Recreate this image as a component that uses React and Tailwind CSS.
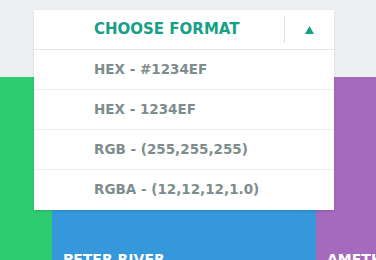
import React, { useState } from "react";

const formatos = ["HEX - #1234EF", "HEX - 1234EF", "RGB - (255,255,255)", "RGBA - (12,12,12,1.0)"];

const colores = [
  { nombre: "", clase: "bg-[#2ecc71] w-[52px]" },
  { nombre: "PETER RIVER", clase: "bg-[#3498db] w-[264px]" },
  { nombre: "AMETHYST", clase: "bg-[#a569bd] w-[264px]" },
];

const App = () => {
  const [abierto] = useState(true);

  return (
    <div className="relative w-[376px] h-[260px] overflow-hidden bg-[#ecf0f1] font-['DejaVu_Sans',sans-serif] font-bold">
      <div className="flex pt-[77px]">
        {colores.map((c, i) => (
          <div key={i} className={`${c.clase} shrink-0 h-[200px] pt-[175px] px-[11px] text-white text-[14px] leading-none whitespace-nowrap overflow-hidden`}>
            {c.nombre}
          </div>
        ))}
      </div>

      <div className="absolute left-[34px] top-[10px] w-[300px] bg-white shadow-sm">
        <div className="flex items-center h-[40px] border-b border-[#e6e8e9]">
          <div className="flex-1 pl-[60px] text-[15px] text-[#16a085] leading-none">CHOOSE FORMAT</div>
          <div className="w-px h-[27px] bg-[#dcdfe0]" />
          <div className="w-[49px] flex justify-center">
            <svg width="9" height="8" viewBox="0 0 9 8">
              <polygon points="4.5,0 9,8 0,8" fill="#16a085" />
            </svg>
          </div>
        </div>
        {abierto &&
          formatos.map((f, i) => (
            <div
              key={f}
              className={`h-[40px] flex items-center pl-[60px] text-[13.5px] text-[#7f8c8d] leading-none ${i < formatos.length - 1 ? "border-b border-[#eceeef]" : ""}`}
            >
              {f}
            </div>
          ))}
      </div>
    </div>
  );
};

export default App;
